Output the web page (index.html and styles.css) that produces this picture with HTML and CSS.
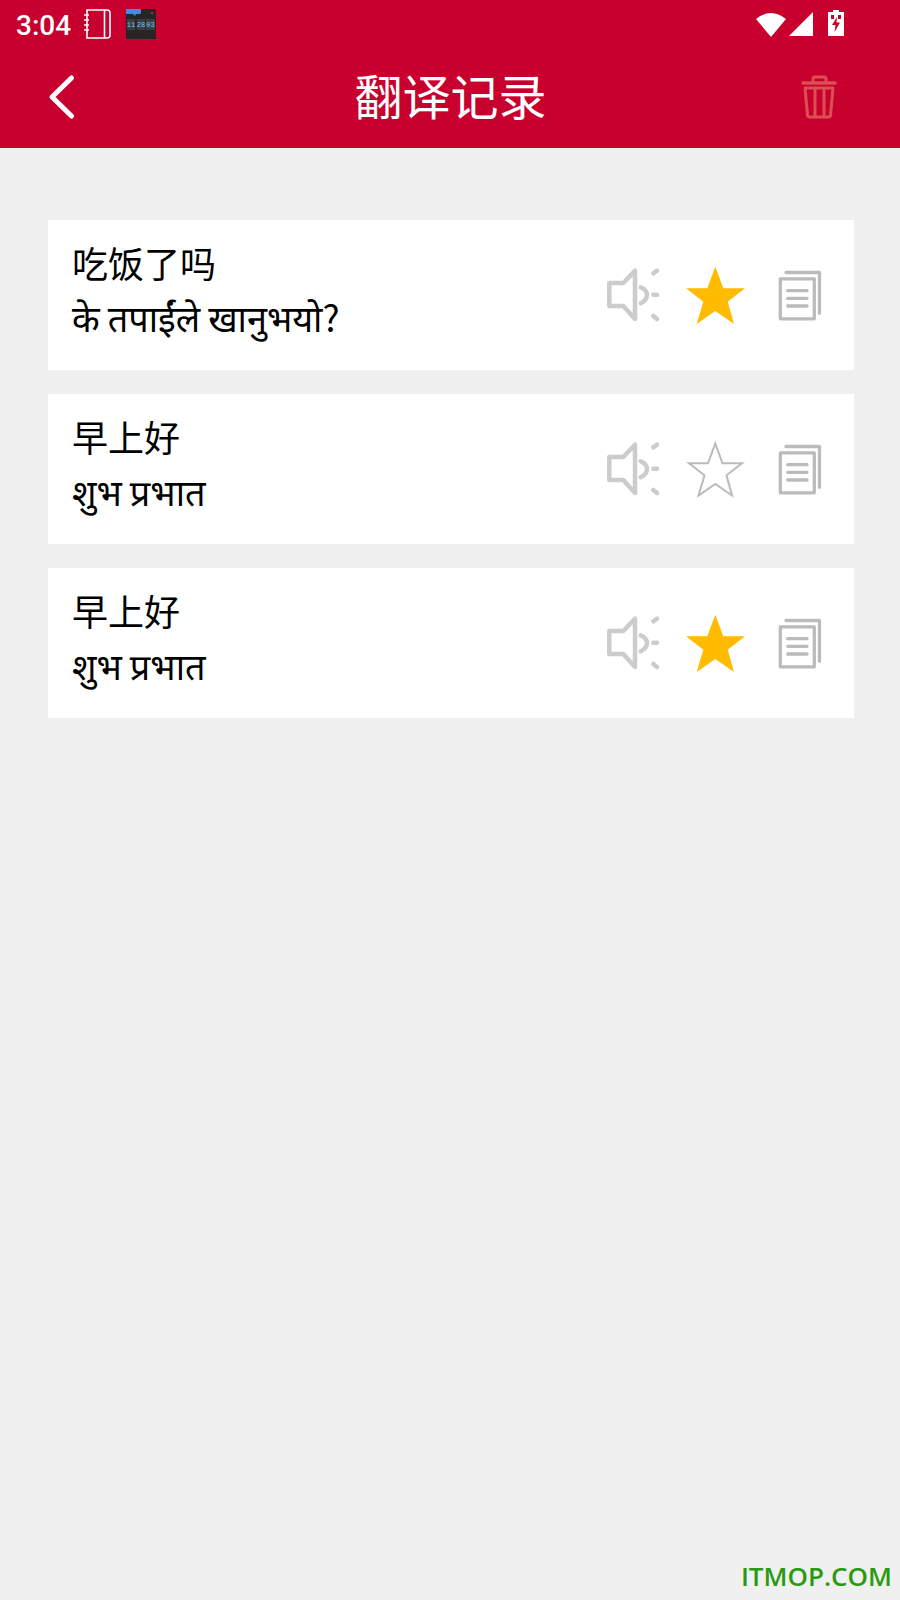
FILE: index.html
```html
<!DOCTYPE html>
<html lang="zh-CN">
<head>
    <meta charset="UTF-8">
    <meta name="viewport" content="width=device-width, initial-scale=1.0">
    <title>翻译记录</title>
    <link rel="stylesheet" href="styles.css">
</head>
<body>
    <!-- Header -->
    <header class="header">
        <div class="status-bar">
            <span class="time">3:04</span>
            <svg class="note-icon" width="28" height="30" viewBox="0 0 28 30" fill="none" stroke="#fff" stroke-width="1.6">
                <path d="M4 1H24Q27 1 27 4V26Q27 29 24 29H4Z"/>
                <path d="M21.5 1V29"/>
                <path d="M1 6H6M1 11H6M1 16H6M1 21H6"/>
            </svg>
            <svg class="widget-icon" width="30" height="30" viewBox="0 0 30 30">
                <rect width="30" height="30" fill="#262626"/>
                <path d="M0 0H15V4Q15 5 13 5H10L9 7L7 5H0Z" fill="#3f8fe0"/>
                <rect x="25" y="3" width="2" height="2" fill="#d8232a"/>
                <rect x="1" y="10" width="8" height="11" fill="#3a3d42"/>
                <rect x="11" y="10" width="8" height="11" fill="#3a3d42"/>
                <rect x="20" y="10" width="9" height="11" fill="#3a3d42"/>
                <text class="widget-text" x="5" y="18">11</text>
                <text class="widget-text" x="15" y="18">28</text>
                <text class="widget-text" x="24.500" y="18">03</text>
            </svg>
            <div class="status-right">
                <svg width="30" height="25" viewBox="0 0 30 25" fill="#fff">
                    <path d="M0 7Q15 -5 30 7L15 25Z"/>
                </svg>
                <svg width="24" height="24" viewBox="0 0 24 24" fill="#fff">
                    <path d="M24 0V24H0Z"/>
                </svg>
                <svg class="battery" width="16" height="26" viewBox="0 0 16 26">
                    <path d="M5 0H11V2H16V26H0V2H5Z" fill="#fff"/>
                    <path d="M9 7L4 15H7.500L6.500 22L12 12.500H8.500Z" fill="#c8002d"/>
                    <path d="M3 5H6V9H3ZM10 5H13V9H10Z" fill="#c8002d"/>
                </svg>
            </div>
        </div>
        <div class="app-bar">
            <svg class="back-btn" width="100" height="60" viewBox="0 0 100 60" fill="none" stroke="#fff" stroke-width="5" stroke-linecap="round" stroke-linejoin="round">
                <path d="M71.500 10L52 29L71.500 48"/>
            </svg>
            <h1 class="title">翻译记录</h1>
            <svg class="trash-btn" width="100" height="60" viewBox="0 0 100 60" fill="none" stroke="#dc4f55" stroke-width="3" stroke-linecap="round" stroke-linejoin="round">
                <path d="M36 15H68" stroke-width="3.500"/>
                <path d="M46 14V11Q46 9 48 9H57Q59 9 59 11V14"/>
                <path d="M38 20H66L63.500 47Q63.500 49 61 49H43Q40.500 49 40.500 47Z"/>
                <path d="M48 20V49M57 20V49"/>
            </svg>
        </div>
    </header>

    <!-- Records -->
    <main class="records">
        <div class="record">
            <div class="record-text">
                <p>吃饭了吗</p>
                <p lang="ne">के तपाईंले खानुभयो?</p>
            </div>
            <div class="actions">
                <svg width="60" height="60" viewBox="0 0 60 60" fill="none" stroke="#ccc" stroke-width="4.500" stroke-linecap="round" stroke-linejoin="round">
                    <path d="M6.300 18H20.300L32 5.700V54L20.300 41H6.300Z"/>
                    <path d="M37.700 22.300Q44 25 44 30T37.700 38.300"/>
                    <path d="M50.300 8.300L54 5.700M50.300 29.700H54M50.300 51L54 54"/>
                </svg>
                <svg width="60" height="60" viewBox="0 0 60 60" fill="#ffbb00">
                    <path d="M29.300 1.700L37.300 23.300H59L41.700 36.700L48 59L29.300 46L10.700 59L17.300 36.700L0 23.300H21.300Z"/>
                </svg>
                <svg width="60" height="60" viewBox="0 0 60 60" fill="none" stroke="#bbb" stroke-width="3.300" stroke-linecap="round" stroke-linejoin="round">
                    <path d="M17 7.500H50.500V48.300"/>
                    <rect x="11.300" y="13.800" width="34" height="40"/>
                    <path d="M18.700 25.700H38M18.700 33.300H38M18.700 41H38"/>
                </svg>
            </div>
        </div>
        <div class="record">
            <div class="record-text">
                <p>早上好</p>
                <p lang="ne">शुभ प्रभात</p>
            </div>
            <div class="actions">
                <svg width="60" height="60" viewBox="0 0 60 60" fill="none" stroke="#ccc" stroke-width="4.500" stroke-linecap="round" stroke-linejoin="round">
                    <path d="M6.300 18H20.300L32 5.700V54L20.300 41H6.300Z"/>
                    <path d="M37.700 22.300Q44 25 44 30T37.700 38.300"/>
                    <path d="M50.300 8.300L54 5.700M50.300 29.700H54M50.300 51L54 54"/>
                </svg>
                <svg width="60" height="60" viewBox="0 0 60 60" fill="none" stroke="#bbb" stroke-width="2">
                    <path d="M29.300 4.500L36.500 24.300H56L40.500 36.300L46 56.500L29.300 45L12.500 56.500L18.500 36.300L3 24.300H22Z"/>
                </svg>
                <svg width="60" height="60" viewBox="0 0 60 60" fill="none" stroke="#bbb" stroke-width="3.300" stroke-linecap="round" stroke-linejoin="round">
                    <path d="M17 7.500H50.500V48.300"/>
                    <rect x="11.300" y="13.800" width="34" height="40"/>
                    <path d="M18.700 25.700H38M18.700 33.300H38M18.700 41H38"/>
                </svg>
            </div>
        </div>
        <div class="record">
            <div class="record-text">
                <p>早上好</p>
                <p lang="ne">शुभ प्रभात</p>
            </div>
            <div class="actions">
                <svg width="60" height="60" viewBox="0 0 60 60" fill="none" stroke="#ccc" stroke-width="4.500" stroke-linecap="round" stroke-linejoin="round">
                    <path d="M6.300 18H20.300L32 5.700V54L20.300 41H6.300Z"/>
                    <path d="M37.700 22.300Q44 25 44 30T37.700 38.300"/>
                    <path d="M50.300 8.300L54 5.700M50.300 29.700H54M50.300 51L54 54"/>
                </svg>
                <svg width="60" height="60" viewBox="0 0 60 60" fill="#ffbb00">
                    <path d="M29.300 1.700L37.300 23.300H59L41.700 36.700L48 59L29.300 46L10.700 59L17.300 36.700L0 23.300H21.300Z"/>
                </svg>
                <svg width="60" height="60" viewBox="0 0 60 60" fill="none" stroke="#bbb" stroke-width="3.300" stroke-linecap="round" stroke-linejoin="round">
                    <path d="M17 7.500H50.500V48.300"/>
                    <rect x="11.300" y="13.800" width="34" height="40"/>
                    <path d="M18.700 25.700H38M18.700 33.300H38M18.700 41H38"/>
                </svg>
            </div>
        </div>
    </main>

    <div class="watermark">ITMOP.COM</div>
</body>
</html>
```
FILE: styles.css
```css
body {
    font-family: "Noto Sans CJK SC", "Noto Sans", sans-serif;
    margin: 0;
    padding: 0;
    width: 900px;
    height: 1600px;
    position: relative;
    overflow: hidden;
    background-color: #f0f0f0;
    color: #000;
}
.header {
    height: 148px;
    background-color: #c8002d;
    color: #fff;
}
.status-bar {
    height: 48px;
    padding-left: 16px;
    display: flex;
    align-items: center;
}
.time {
    font-family: Roboto, sans-serif;
    font-size: 28px;
    font-weight: 500;
    width: 67px;
    margin-top: 2px;
}
.note-icon {
    margin-right: 15px;
}
.widget-text {
    font-family: "Liberation Mono", monospace;
    font-size: 7px;
    fill: #6cc8f8;
    text-anchor: middle;
}
.status-right {
    margin-left: auto;
    margin-right: 56px;
    display: flex;
    align-items: center;
    gap: 3px;
}
.battery {
    margin-left: 12px;
    margin-bottom: 2px;
}
.app-bar {
    height: 100px;
    display: grid;
    grid-template-columns: 1fr auto 1fr;
    align-items: center;
}
.trash-btn {
    justify-self: end;
    margin-right: 33px;
}
.title {
    margin: 0 0 8px 1px;
    font-size: 48px;
    font-weight: 400;
    line-height: 60px;
}
.records {
    padding: 72px 46px 0 48px;
    display: flex;
    flex-direction: column;
    gap: 24px;
}
.record {
    height: 150px;
    background-color: #fff;
    padding-left: 24px;
    padding-right: 25px;
    display: flex;
    align-items: center;
    justify-content: space-between;
}
.record-text {
    margin-bottom: 12px;
}
.record-text p {
    margin: 0;
    font-size: 36px;
    line-height: 54px;
}
.actions {
    display: flex;
    align-items: center;
    gap: 23px;
}
.watermark {
    position: absolute;
    right: 8px;
    bottom: 6px;
    font-family: "Open Sans", sans-serif;
    font-size: 26px;
    font-weight: 600;
    color: #2a9a10;
}
```
